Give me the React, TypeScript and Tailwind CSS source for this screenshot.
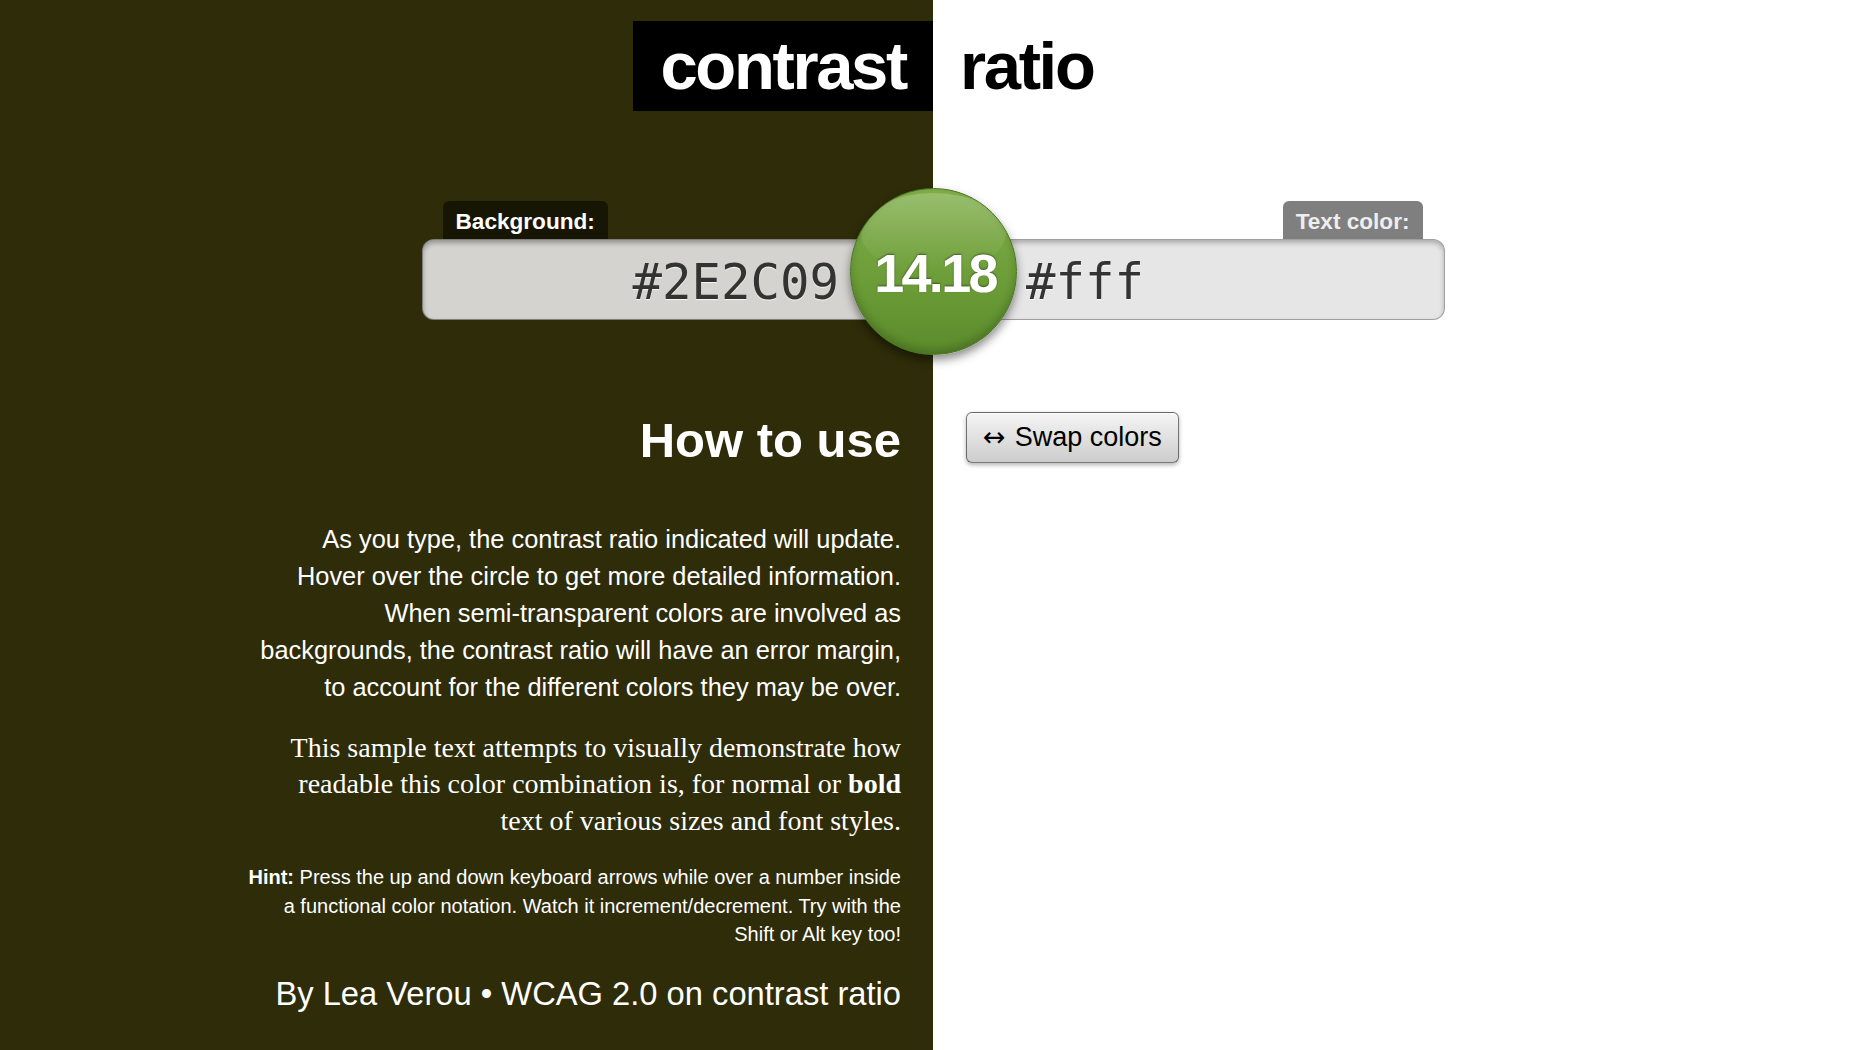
export default function App() {
  return (
    <div className="min-h-screen bg-[linear-gradient(to_right,#2e2c09_50%,#ffffff_50%)] font-['Liberation_Sans',Arial,Helvetica,sans-serif] text-white">
      {/* Title */}
      <header className="grid grid-cols-2 pt-[21px]">
        <div className="flex justify-end">
          <h1 className="bg-black px-[27px] text-[67px] font-bold leading-[90px] tracking-[-0.035em] text-white">
            contrast
          </h1>
        </div>
        <div className="pl-[27px] text-[67px] font-bold leading-[90px] tracking-[-0.035em] text-black">
          ratio
        </div>
      </header>

      {/* Color inputs */}
      <section className="relative mx-auto mt-[90px] grid w-[1023px] grid-cols-2">
        <div className="flex flex-col items-start">
          <label className="ml-[21px] flex h-[38px] items-center rounded-t-[6px] bg-black/50 px-[13px] pt-[3px] text-[22.6px] font-bold text-white">
            Background:
          </label>
          <div className="flex h-[81px] w-full items-center justify-end rounded-l-[12px] border border-r-0 border-black/40 bg-[#d4d3cf] pr-[94px] pt-[7px] font-['DejaVu_Sans_Mono',monospace] text-[49px] text-[#333] shadow-[inset_0_3px_5px_rgba(0,0,0,0.3)] [text-shadow:0_1px_1px_rgba(255,255,255,0.8)]">
            #2E2C09
          </div>
        </div>
        <div className="flex flex-col items-end">
          <label className="mr-[22px] flex h-[38px] items-center rounded-t-[6px] bg-black/50 px-[13px] pt-[3px] text-[22.6px] font-bold text-[#eeeeee]">
            Text color:
          </label>
          <div className="flex h-[81px] w-full items-center justify-start rounded-r-[12px] border border-l-0 border-black/30 bg-[#e6e6e6] pl-[93px] pt-[7px] font-['DejaVu_Sans_Mono',monospace] text-[49px] text-[#333] shadow-[inset_0_3px_5px_rgba(0,0,0,0.25)] [text-shadow:0_1px_1px_rgba(255,255,255,0.9)]">
            #fff
          </div>
        </div>

        <output className="absolute left-1/2 top-[-13px] -ml-[83.5px] flex h-[167px] w-[167px] items-center justify-center overflow-hidden rounded-full border border-[#4a7520] bg-[linear-gradient(to_bottom,#80ae49,#6c9d38_55%,#5b8b2b)] pl-[4px] pt-[4px] text-[54px] font-bold tracking-[-0.05em] text-white shadow-[0_5px_10px_rgba(0,0,0,0.45),inset_0_-4px_8px_rgba(0,0,0,0.2)] [text-shadow:0_-1px_2px_rgba(0,0,0,0.45)]">
          <span className="absolute left-[10px] right-[10px] top-[4px] h-[80px] rounded-[50%] bg-gradient-to-b from-white/20 to-white/0" />
          <span className="relative">14.18</span>
        </output>
      </section>

      {/* Content */}
      <main className="mt-[92px] grid grid-cols-2">
        <div className="pr-[32px] text-right">
          <h2 className="text-[49px] font-bold leading-[57.6px]">How to use</h2>
          <p className="mt-[51px] text-[25.4px] leading-[37px]">
            As you type, the contrast ratio indicated will update.
            <br />
            Hover over the circle to get more detailed information.
            <br />
            When semi-transparent colors are involved as
            <br />
            backgrounds, the contrast ratio will have an error margin,
            <br />
            to account for the different colors they may be over.
          </p>
          <p className="mt-[24px] font-['Liberation_Serif',Georgia,serif] text-[28px] leading-[36.5px]">
            This sample text attempts to visually demonstrate how
            <br />
            readable this color combination is, for normal or <strong>bold</strong>
            <br />
            text of various sizes and font styles.
          </p>
          <p className="mt-[24px] text-[20px] leading-[28.5px]">
            <strong>Hint:</strong> Press the up and down keyboard arrows while over a number inside
            <br />
            a functional color notation. Watch it increment/decrement. Try with the
            <br />
            Shift or Alt key too!
          </p>
          <footer className="mt-[21px] text-[32.7px] leading-[48px]">
            <a href="#">By Lea Verou</a> • <a href="#">WCAG 2.0 on contrast ratio</a>
          </footer>
        </div>
        <div className="pl-[33px]">
          <button className="flex h-[51px] items-center gap-[9px] rounded-[6px] border border-black/50 bg-gradient-to-b from-[#f5f5f5] to-[#cdcdcd] px-[16px] text-[27px] text-black shadow-[0_2px_4px_rgba(0,0,0,0.3),inset_0_1px_0_rgba(255,255,255,0.9)]">
            <span className="font-['DejaVu_Sans',sans-serif] text-[27px]">↔</span>
            <span>Swap colors</span>
          </button>
        </div>
      </main>
    </div>
  );
}
